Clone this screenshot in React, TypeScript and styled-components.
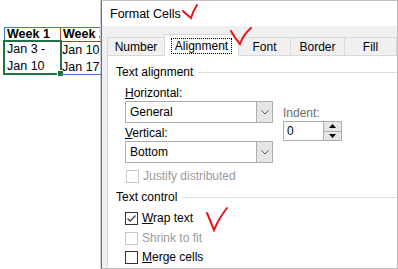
import React from 'react';
import styled, { createGlobalStyle } from 'styled-components';

const GlobalStyle = createGlobalStyle`
  html, body {
    margin: 0;
    padding: 0;
    background: #ffffff;
  }
  body {
    font-family: 'Liberation Sans', Arial, sans-serif;
    font-size: 12px;
    color: #000000;
  }
`;

const Screen = styled.div`
  position: relative;
  width: 398px;
  height: 269px;
  display: flex;
  overflow: hidden;
  background: #ffffff;
`;

/* ---------- spreadsheet behind the dialog ---------- */

const Sheet = styled.div`
  width: 101px;
  flex-shrink: 0;
  overflow: hidden;
  padding: 27px 0 0 4px;
  box-sizing: border-box;
`;

const SheetGrid = styled.div`
  display: grid;
  grid-template-columns: 57px 62px;
  grid-template-rows: 14px 33px;
  font-size: 12.5px;
`;

const HeadCell = styled.div<{ $first?: boolean }>`
  border-top: 1px solid #4472c4;
  border-left: ${(p) => (p.$first ? '1px solid #4472c4' : 'none')};
  border-right: ${(p) => (p.$first ? '1px solid #9c4a1a' : 'none')};
  font-weight: bold;
  line-height: 13px;
  padding-left: 2px;
  white-space: nowrap;
`;

const DataCell = styled.div<{ $selected?: boolean }>`
  position: relative;
  line-height: 16.5px;
  padding-left: ${(p) => (p.$selected ? '3px' : '1px')};
  border-top: ${(p) => (p.$selected ? 'none' : '1px solid #9c4a1a')};
  border-bottom: ${(p) => (p.$selected ? 'none' : '1px solid #4472c4')};
  box-sizing: border-box;
  height: ${(p) => (p.$selected ? '33px' : '34px')};
  white-space: nowrap;

  &::before {
    content: '';
    display: ${(p) => (p.$selected ? 'block' : 'none')};
    position: absolute;
    left: -1px;
    top: -1px;
    right: -1px;
    bottom: -1px;
    border: 2px solid #217346;
  }
  &::after {
    content: '';
    display: ${(p) => (p.$selected ? 'block' : 'none')};
    position: absolute;
    right: -3px;
    bottom: -3px;
    width: 5px;
    height: 5px;
    background: #217346;
    border: 1px solid #ffffff;
  }
`;

/* ---------- dialog ---------- */

const Dialog = styled.div`
  flex: 1;
  display: flex;
  flex-direction: column;
  border-left: 1px solid #6e6e6e;
  border-top: 1px solid #c4c4c4;
  border-right: 1px solid #bcbcbc;
  border-bottom: 1px solid #bcbcbc;
  box-shadow: -1px 0 0 #cfcfcf;
  background: #f0f0f0;
`;

const TitleBar = styled.div`
  height: 25px;
  background: #ffffff;
  padding-left: 8px;
  display: flex;
  align-items: center;
  font-size: 12.5px;
  color: #000000;
`;

const Body = styled.div`
  flex: 1;
  display: flex;
  flex-direction: column;
  padding: 8px 0 0 5px;
`;

const TabRow = styled.div`
  display: flex;
  align-items: flex-end;
  position: relative;
  z-index: 1;
`;

const Tab = styled.div<{ $w: number; $active?: boolean; $last?: boolean }>`
  width: ${(p) => p.$w}px;
  box-sizing: border-box;
  height: ${(p) => (p.$active ? '22px' : '18px')};
  margin-bottom: ${(p) => (p.$active ? '-1px' : '0')};
  border: 1px solid #d9d9d9;
  border-bottom: none;
  border-right: ${(p) => (p.$last ? '1px solid #d9d9d9' : 'none')};
  background: ${(p) => (p.$active ? '#ffffff' : '#f0f0f0')};
  display: flex;
  align-items: center;
  justify-content: center;
  padding-top: ${(p) => (p.$active ? '0' : '1px')};
  color: #000000;
`;

const Focus = styled.span`
  border: 1px dotted #000000;
  padding: 1px 3px 1px 3px;
  line-height: 12px;
`;

const Panel = styled.div`
  flex: 1;
  background: #ffffff;
  border-top: 1px solid #d9d9d9;
  border-left: 1px solid #d9d9d9;
  padding: 9px 0 0 8px;
  display: flex;
  flex-direction: column;
`;

const Legend = styled.div<{ $gap: number }>`
  display: flex;
  align-items: center;
  line-height: 14px;
  margin-top: ${(p) => p.$gap}px;

  &::after {
    content: '';
    flex: 1;
    height: 1px;
    margin-left: 5px;
    background: #dcdcdc;
  }
`;

const Group = styled.div`
  padding-left: 9px;
  display: flex;
  flex-direction: column;
`;

const FieldRow = styled.div`
  display: flex;
`;

const FieldCol = styled.div<{ $pad?: number; $ml?: number }>`
  display: flex;
  flex-direction: column;
  padding-top: ${(p) => p.$pad ?? 0}px;
  margin-left: ${(p) => p.$ml ?? 0}px;
`;

const Label = styled.div<{ $gap: number; $muted?: boolean }>`
  line-height: 14px;
  margin-top: ${(p) => p.$gap}px;
  margin-bottom: 1px;
  color: ${(p) => (p.$muted ? '#6d6d6d' : '#000000')};
`;

const Select = styled.div`
  width: 148px;
  height: 22px;
  box-sizing: border-box;
  border: 1px solid #adadad;
  background: #ffffff;
  display: flex;
  align-items: center;
  padding-left: 4px;
`;

const SelectText = styled.span`
  flex: 1;
`;

const DropButton = styled.span`
  width: 16px;
  height: 20px;
  box-sizing: border-box;
  border-left: 1px solid #adadad;
  background: #e5e5e5;
  display: flex;
  align-items: center;
  justify-content: center;
`;

const Spin = styled.div`
  width: 59px;
  height: 20px;
  box-sizing: border-box;
  border: 1px solid #adadad;
  display: flex;
  align-items: center;
`;

const SpinValue = styled.span`
  flex: 1;
  padding-left: 3px;
`;

const SpinButtons = styled.span`
  width: 17px;
  height: 18px;
  display: flex;
  flex-direction: column;
  border-left: 1px solid #adadad;
`;

const SpinHalf = styled.span<{ $top?: boolean }>`
  flex: 1;
  background: #e5e5e5;
  border-bottom: ${(p) => (p.$top ? '1px solid #adadad' : 'none')};
  display: flex;
  align-items: center;
  justify-content: center;
`;

const CheckRow = styled.div<{ $gap: number; $disabled?: boolean; $indent?: number }>`
  display: flex;
  align-items: center;
  gap: 4px;
  height: 14px;
  margin-top: ${(p) => p.$gap}px;
  padding-left: ${(p) => p.$indent ?? 0}px;
  color: ${(p) => (p.$disabled ? '#9a9a9a' : '#000000')};
`;

const Box = styled.span<{ $disabled?: boolean }>`
  width: 13px;
  height: 13px;
  box-sizing: border-box;
  border: 1px solid ${(p) => (p.$disabled ? '#c8c8c8' : '#333333')};
  background: #ffffff;
  display: flex;
  align-items: center;
  justify-content: center;
`;

const Mark = styled.svg<{ $x: number; $y: number }>`
  position: absolute;
  left: ${(p) => p.$x}px;
  top: ${(p) => p.$y}px;
  z-index: 5;
  overflow: visible;
  pointer-events: none;
`;

const Chevron = () => (
  <svg width="8" height="5" viewBox="0 0 8 5">
    <path d="M0.5 0.5 L4 4 L7.5 0.5" fill="none" stroke="#555" strokeWidth="1" />
  </svg>
);

const Arrow = ({ up }: { up?: boolean }) => (
  <svg width="7" height="4" viewBox="0 0 7 4">
    <path d={up ? 'M0 4 L3.5 0 L7 4 Z' : 'M0 0 L3.5 4 L7 0 Z'} fill="#000" />
  </svg>
);

const tabs = [
  { name: 'Number', w: 57 },
  { name: 'Alignment', w: 74, active: true },
  { name: 'Font', w: 52 },
  { name: 'Border', w: 54 },
  { name: 'Fill', w: 53, last: true },
];

export default function App() {
  return (
    <Screen>
      <GlobalStyle />
      <Sheet>
        <SheetGrid>
          <HeadCell $first>Week 1</HeadCell>
          <HeadCell>Week 2</HeadCell>
          <DataCell $selected>
            Jan 3 -
            <br />
            Jan 10
          </DataCell>
          <DataCell>
            Jan 10 -
            <br />
            Jan 17
          </DataCell>
        </SheetGrid>
      </Sheet>

      <Dialog>
        <TitleBar>Format Cells</TitleBar>
        <Body>
          <TabRow>
            {tabs.map((t) => (
              <Tab key={t.name} $w={t.w} $active={t.active} $last={t.last}>
                {t.active ? <Focus>{t.name}</Focus> : t.name}
              </Tab>
            ))}
          </TabRow>
          <Panel>
            <Legend $gap={0}>Text alignment</Legend>
            <Group>
              <FieldRow>
                <FieldCol>
                  <Label $gap={7}>
                    <u>H</u>orizontal:
                  </Label>
                  <Select>
                    <SelectText>General</SelectText>
                    <DropButton>
                      <Chevron />
                    </DropButton>
                  </Select>
                  <Label $gap={3}>
                    <u>V</u>ertical:
                  </Label>
                  <Select>
                    <SelectText>Bottom</SelectText>
                    <DropButton>
                      <Chevron />
                    </DropButton>
                  </Select>
                </FieldCol>
                <FieldCol $pad={20} $ml={10}>
                  <Label $gap={7} $muted>
                    Indent:
                  </Label>
                  <Spin>
                    <SpinValue>0</SpinValue>
                    <SpinButtons>
                      <SpinHalf $top>
                        <Arrow up />
                      </SpinHalf>
                      <SpinHalf>
                        <Arrow />
                      </SpinHalf>
                    </SpinButtons>
                  </Spin>
                </FieldCol>
              </FieldRow>
              <CheckRow $gap={6} $disabled $indent={1}>
                <Box $disabled />
                Justify distributed
              </CheckRow>
            </Group>

            <Legend $gap={7}>Text control</Legend>
            <Group>
              <CheckRow $gap={7}>
                <Box>
                  <svg width="11" height="11" viewBox="0 0 11 11">
                    <path d="M1.5 5.5 L4.2 8.2 L9.5 2.5" fill="none" stroke="#333" strokeWidth="1.2" />
                  </svg>
                </Box>
                <span>
                  <u>W</u>rap text
                </span>
              </CheckRow>
              <CheckRow $gap={6} $disabled>
                <Box $disabled />
                Shrink to fit
              </CheckRow>
              <CheckRow $gap={5}>
                <Box />
                <span>
                  <u>M</u>erge cells
                </span>
              </CheckRow>
            </Group>
          </Panel>
        </Body>
      </Dialog>

      {/* red hand-drawn annotation ticks */}
      <Mark $x={181} $y={3} width="18" height="18" viewBox="0 0 18 18">
        <path d="M2 8 Q5 11 10 15 Q12 8 16 2" fill="none" stroke="#e8141c" strokeWidth="2" strokeLinecap="round" />
      </Mark>
      <Mark $x={229} $y={26} width="24" height="20" viewBox="0 0 24 20">
        <path d="M2 5 Q5 11 11 18 Q14 9 22 2" fill="none" stroke="#e8141c" strokeWidth="2" strokeLinecap="round" />
      </Mark>
      <Mark $x={205} $y={206} width="24" height="26" viewBox="0 0 24 26">
        <path d="M2 7 Q5 14 9 24 Q14 12 22 2" fill="none" stroke="#e8141c" strokeWidth="2" strokeLinecap="round" />
      </Mark>
    </Screen>
  );
}
